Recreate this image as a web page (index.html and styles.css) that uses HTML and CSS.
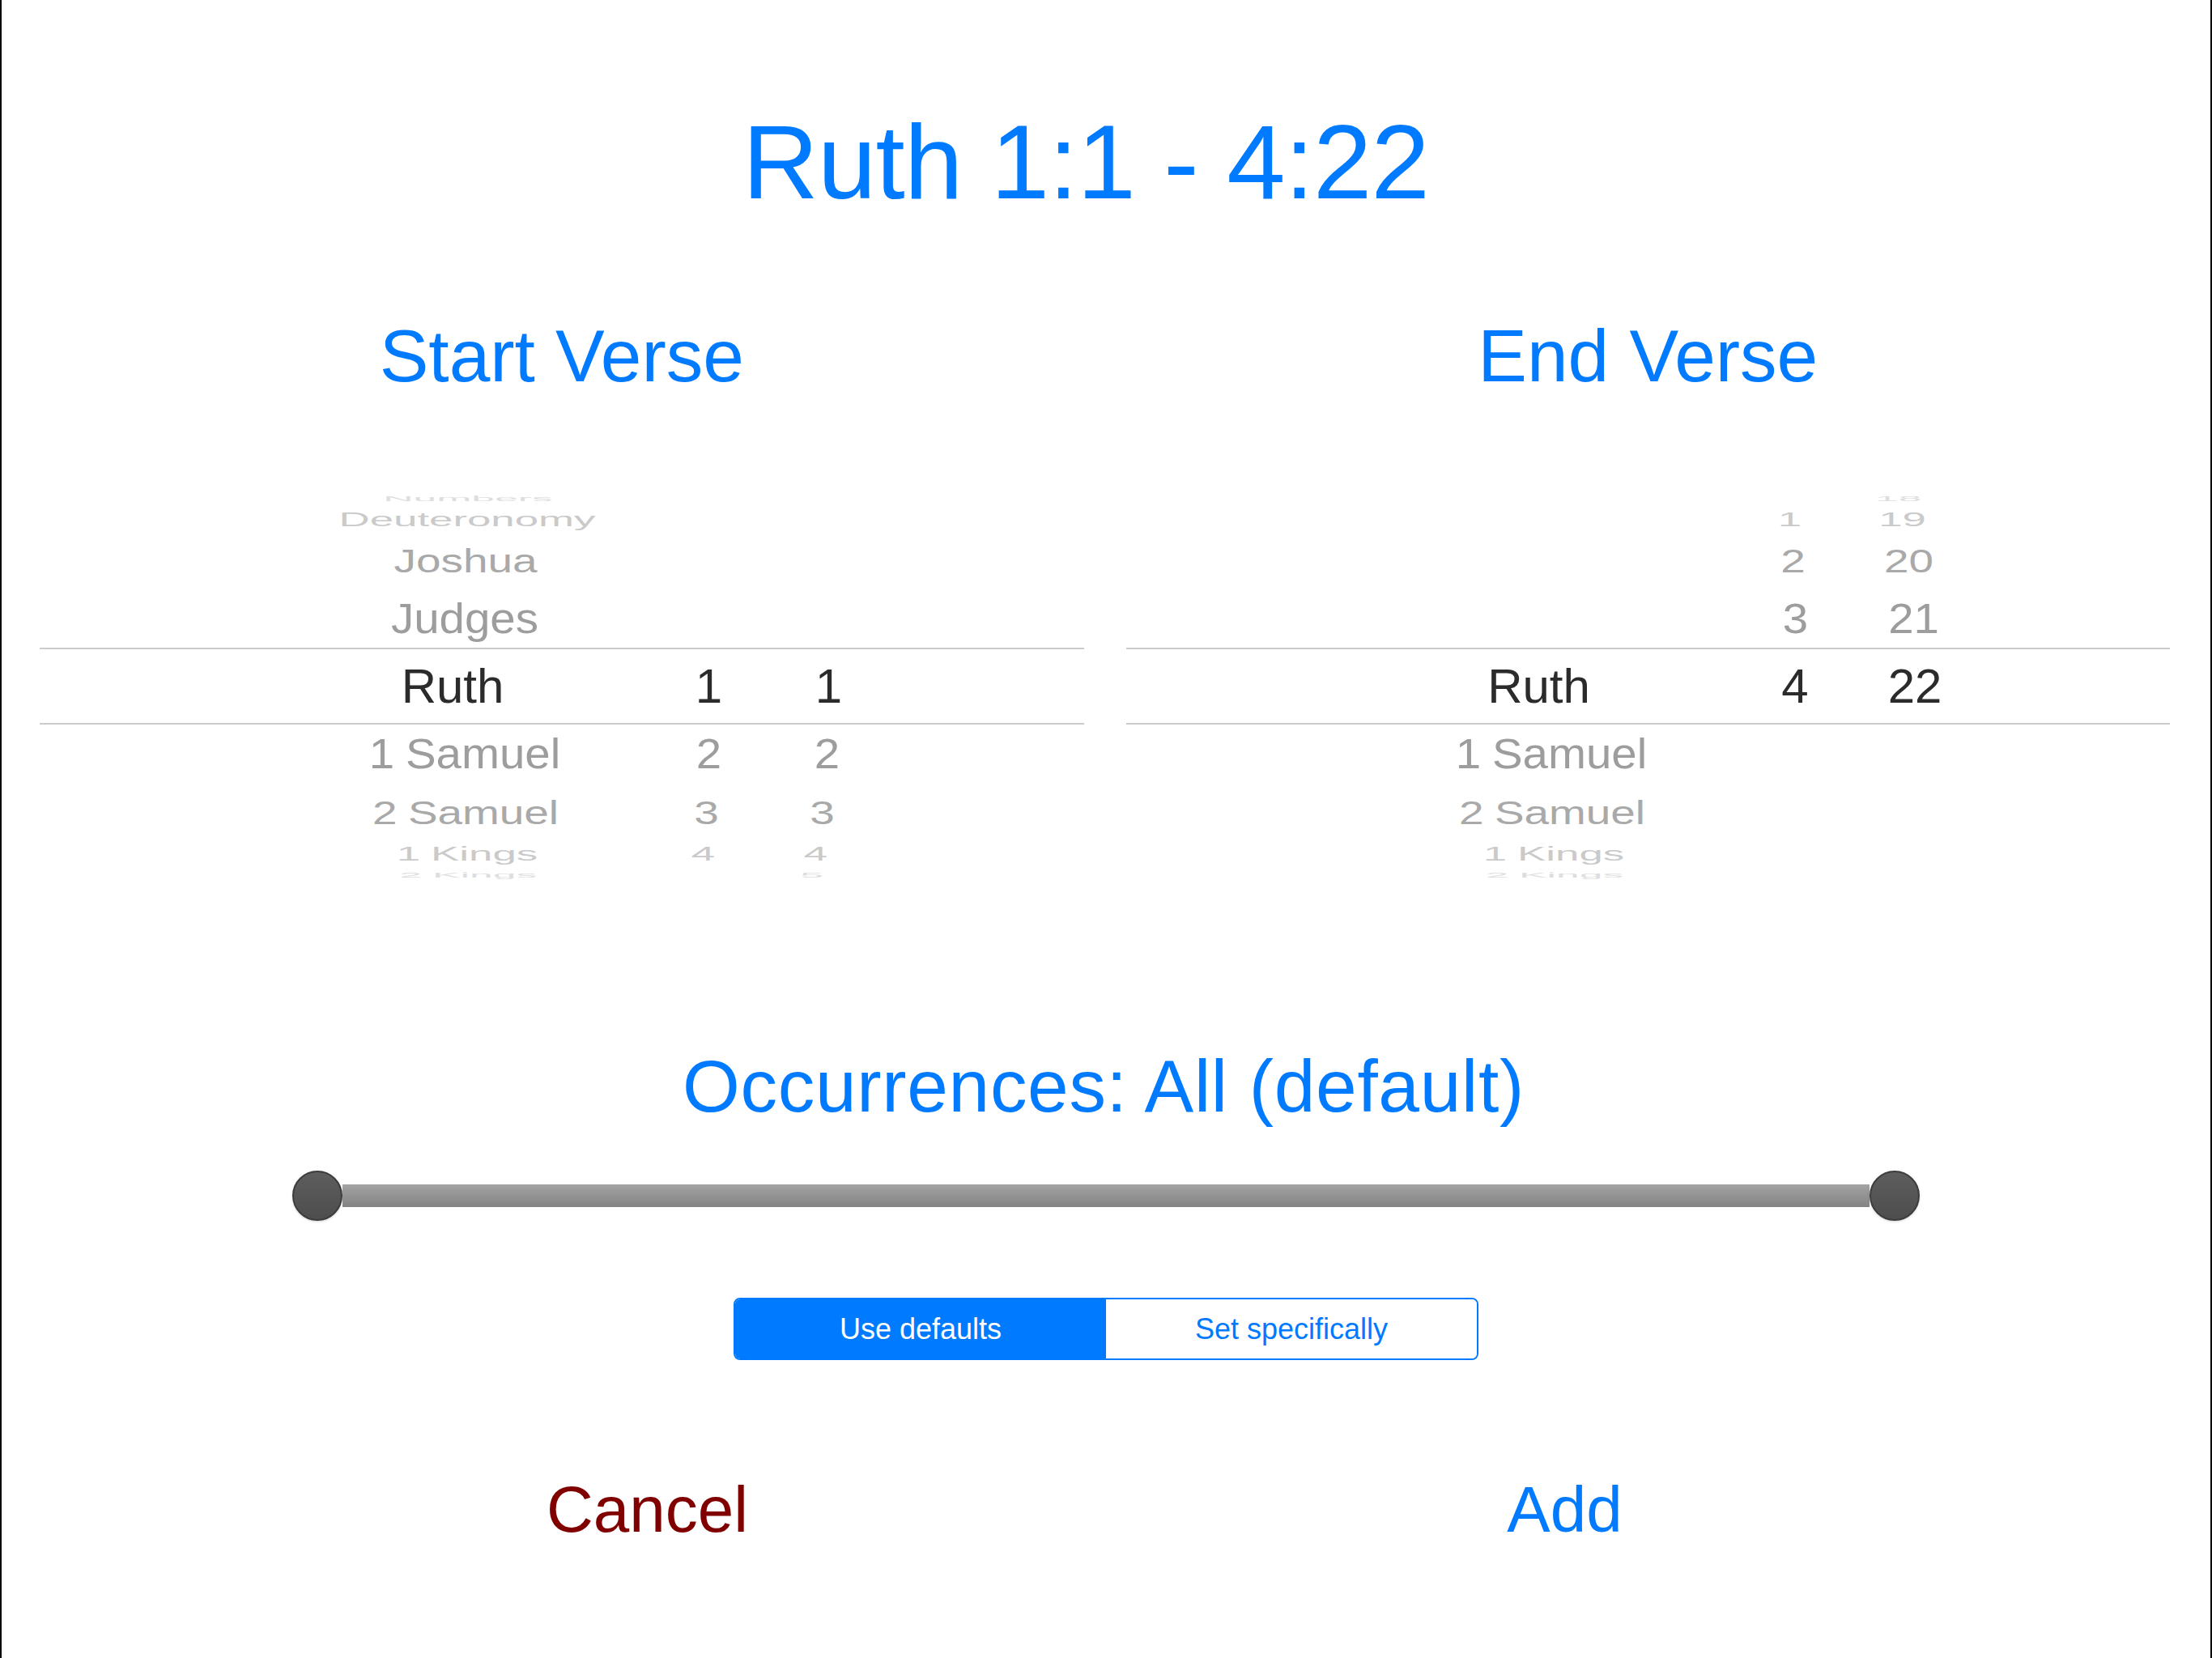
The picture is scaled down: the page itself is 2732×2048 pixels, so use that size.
FILE: index.html
```html
<!DOCTYPE html>
<html lang="en">
<head>
<meta charset="utf-8">
<title>Ruth 1:1 - 4:22</title>
<link rel="stylesheet" href="styles.css">
</head>
<body>
<main class="sheet">
  <h1 class="range">Ruth 1:1 - 4:22</h1>

  <section class="pickers">
    <div class="picker-col">
      <h2 class="heading">Start Verse</h2>
      <div class="wheel">
        <div class="row k4 top"><span class="book">Numbers</span><span class="ch"></span><span class="vs"></span></div>
        <div class="row k3 top"><span class="book">Deuteronomy</span><span class="ch"></span><span class="vs"></span></div>
        <div class="row k2 top"><span class="book">Joshua</span><span class="ch"></span><span class="vs"></span></div>
        <div class="row k1 top"><span class="book">Judges</span><span class="ch"></span><span class="vs"></span></div>
        <div class="row sel"><span class="book">Ruth</span><span class="ch">1</span><span class="vs">1</span></div>
        <div class="row k1 bottom"><span class="book">1 Samuel</span><span class="ch">2</span><span class="vs">2</span></div>
        <div class="row k2 bottom"><span class="book">2 Samuel</span><span class="ch">3</span><span class="vs">3</span></div>
        <div class="row k3 bottom"><span class="book">1 Kings</span><span class="ch">4</span><span class="vs">4</span></div>
        <div class="row k4 bottom"><span class="book">2 Kings</span><span class="ch"></span><span class="vs">5</span></div>
      </div>
    </div>
    <div class="picker-col">
      <h2 class="heading">End Verse</h2>
      <div class="wheel">
        <div class="row k4 top"><span class="book"></span><span class="ch"></span><span class="vs">18</span></div>
        <div class="row k3 top"><span class="book"></span><span class="ch">1</span><span class="vs">19</span></div>
        <div class="row k2 top"><span class="book"></span><span class="ch">2</span><span class="vs">20</span></div>
        <div class="row k1 top"><span class="book"></span><span class="ch">3</span><span class="vs">21</span></div>
        <div class="row sel"><span class="book">Ruth</span><span class="ch">4</span><span class="vs">22</span></div>
        <div class="row k1 bottom"><span class="book">1 Samuel</span><span class="ch"></span><span class="vs"></span></div>
        <div class="row k2 bottom"><span class="book">2 Samuel</span><span class="ch"></span><span class="vs"></span></div>
        <div class="row k3 bottom"><span class="book">1 Kings</span><span class="ch"></span><span class="vs"></span></div>
        <div class="row k4 bottom"><span class="book">2 Kings</span><span class="ch"></span><span class="vs"></span></div>
      </div>
    </div>
  </section>

  <h2 class="heading occ">Occurrences: All (default)</h2>

  <div class="slider">
    <span class="knob"></span>
    <span class="track"></span>
    <span class="knob"></span>
  </div>

  <div class="segmented">
    <button class="seg active">Use defaults</button>
    <button class="seg">Set specifically</button>
  </div>

  <div class="actions">
    <button class="action cancel">Cancel</button>
    <button class="action add">Add</button>
  </div>
</main>
</body>
</html>
```

FILE: styles.css
```css
html, body {
  margin: 0;
  padding: 0;
  background: #ffffff;
}

body {
  font-family: "Liberation Sans", Arial, Helvetica, sans-serif;
}

.sheet {
  width: 2732px;
  height: 2048px;
  box-sizing: border-box;
  border-left: 2px solid #000000;
  border-right: 2px solid #000000;
  padding-top: 135px;
  display: flex;
  flex-direction: column;
  align-items: stretch;
  background: #ffffff;
}

.range {
  margin: 0;
  padding-right: 50px;
  font-size: 130px;
  line-height: 130px;
  font-weight: 400;
  letter-spacing: -0.8px;
  color: #007aff;
  text-align: center;
}

.pickers {
  margin-top: 129px;
  padding: 0 50px 0 47px;
  display: grid;
  grid-template-columns: 1fr 1fr;
  column-gap: 52px;
}

.picker-col {
  display: flex;
  flex-direction: column;
}

.heading {
  margin: 0;
  font-size: 91px;
  line-height: 91px;
  font-weight: 400;
  color: #007aff;
  text-align: center;
}

.wheel {
  margin-top: 119px;
  height: 486px;
  overflow: hidden;
  display: flex;
  flex-direction: column;
}

.row {
  flex: none;
  box-sizing: border-box;
  display: grid;
  grid-template-columns: 440px 193px 103px;
  padding-left: 290px;
  align-items: center;
  font-size: 60px;
  line-height: 0;
  white-space: nowrap;
  --sx: 1;
  --sy: 1;
  --dx: 0px;
}

.row span {
  display: block;
  text-align: center;
  transform-origin: 50% 50%;
  transform: translateX(var(--dx)) scale(var(--sx), var(--sy));
}

.row .book {
  word-spacing: -2px;
}

.row.sel {
  height: 95px;
  border-top: 2px solid #cbcbcb;
  border-bottom: 2px solid #cbcbcb;
  color: #2b2b2b;
}

.row.k1 { color: #9d9d9d; --sx: 0.94; --sy: 0.85; }
.row.k2 { color: #a9a9a9; --sx: 0.915; --sy: 0.69; }
.row.k3 { color: #cacaca; --sx: 0.88; --sy: 0.41; }
.row.k4 { color: #dedede; --sx: 0.86; --sy: 0.14; }

.row.k1 .book { --dx: 15px; }
.row.k1 .vs { --dx: -2px; }
.row.k2 .book { --dx: 16px; }
.row.k2 .ch { --dx: -3px; }
.row.k2 .vs { --dx: -8px; }
.row.k3 .book { --dx: 18px; }
.row.k3 .ch { --dx: -7px; }
.row.k3 .vs { --dx: -16px; }
.row.k4 .book { --dx: 19px; }
.row.k4 .ch { --dx: -10px; }
.row.k4 .vs { --dx: -21px; }

.row.k1.top { height: 71px; }
.row.k2.top { height: 73px; }
.row.k3.top { height: 29px; }
.row.k4.top { height: 23px; }

.row.k1.bottom { height: 74px; }
.row.k2.bottom { height: 69px; }
.row.k3.bottom { height: 33px; }
.row.k4.bottom { height: 19px; }

.occ {
  margin-top: 206px;
  padding-right: 6px;
  letter-spacing: 0.7px;
}

.slider {
  margin: 59px auto 0;
  width: 2010px;
  height: 62px;
  display: flex;
  align-items: center;
}

.knob {
  flex: none;
  width: 62px;
  height: 62px;
  box-sizing: border-box;
  border-radius: 50%;
  border: 2px solid #3c3c3c;
  background: linear-gradient(#5e5e5e, #4d4d4d);
  box-shadow: 0 1px 3px rgba(0, 0, 0, 0.18);
}

.track {
  flex: 1;
  height: 28px;
  background: linear-gradient(#a3a3a3, #838383);
}

.segmented {
  margin: 95px auto 0;
  width: 920px;
  height: 77px;
  box-sizing: border-box;
  border: 2px solid #007aff;
  border-radius: 8px;
  overflow: hidden;
  display: flex;
}

.seg {
  flex: 1;
  margin: 0;
  padding: 0;
  border: 0;
  background: #ffffff;
  color: #007aff;
  font-family: "Liberation Sans", Arial, Helvetica, sans-serif;
  font-size: 36px;
  line-height: 73px;
  text-align: center;
}

.seg.active {
  background: #007aff;
  color: #ffffff;
}

.actions {
  margin: 145px auto 0;
  width: 2266px;
  display: grid;
  grid-template-columns: 1fr 1fr;
}

.action {
  margin: 0;
  padding: 0;
  border: 0;
  background: transparent;
  font-family: "Liberation Sans", Arial, Helvetica, sans-serif;
  font-size: 80px;
  line-height: 80px;
  text-align: center;
}

.cancel { color: #800000; }
.add { color: #007aff; }
```
